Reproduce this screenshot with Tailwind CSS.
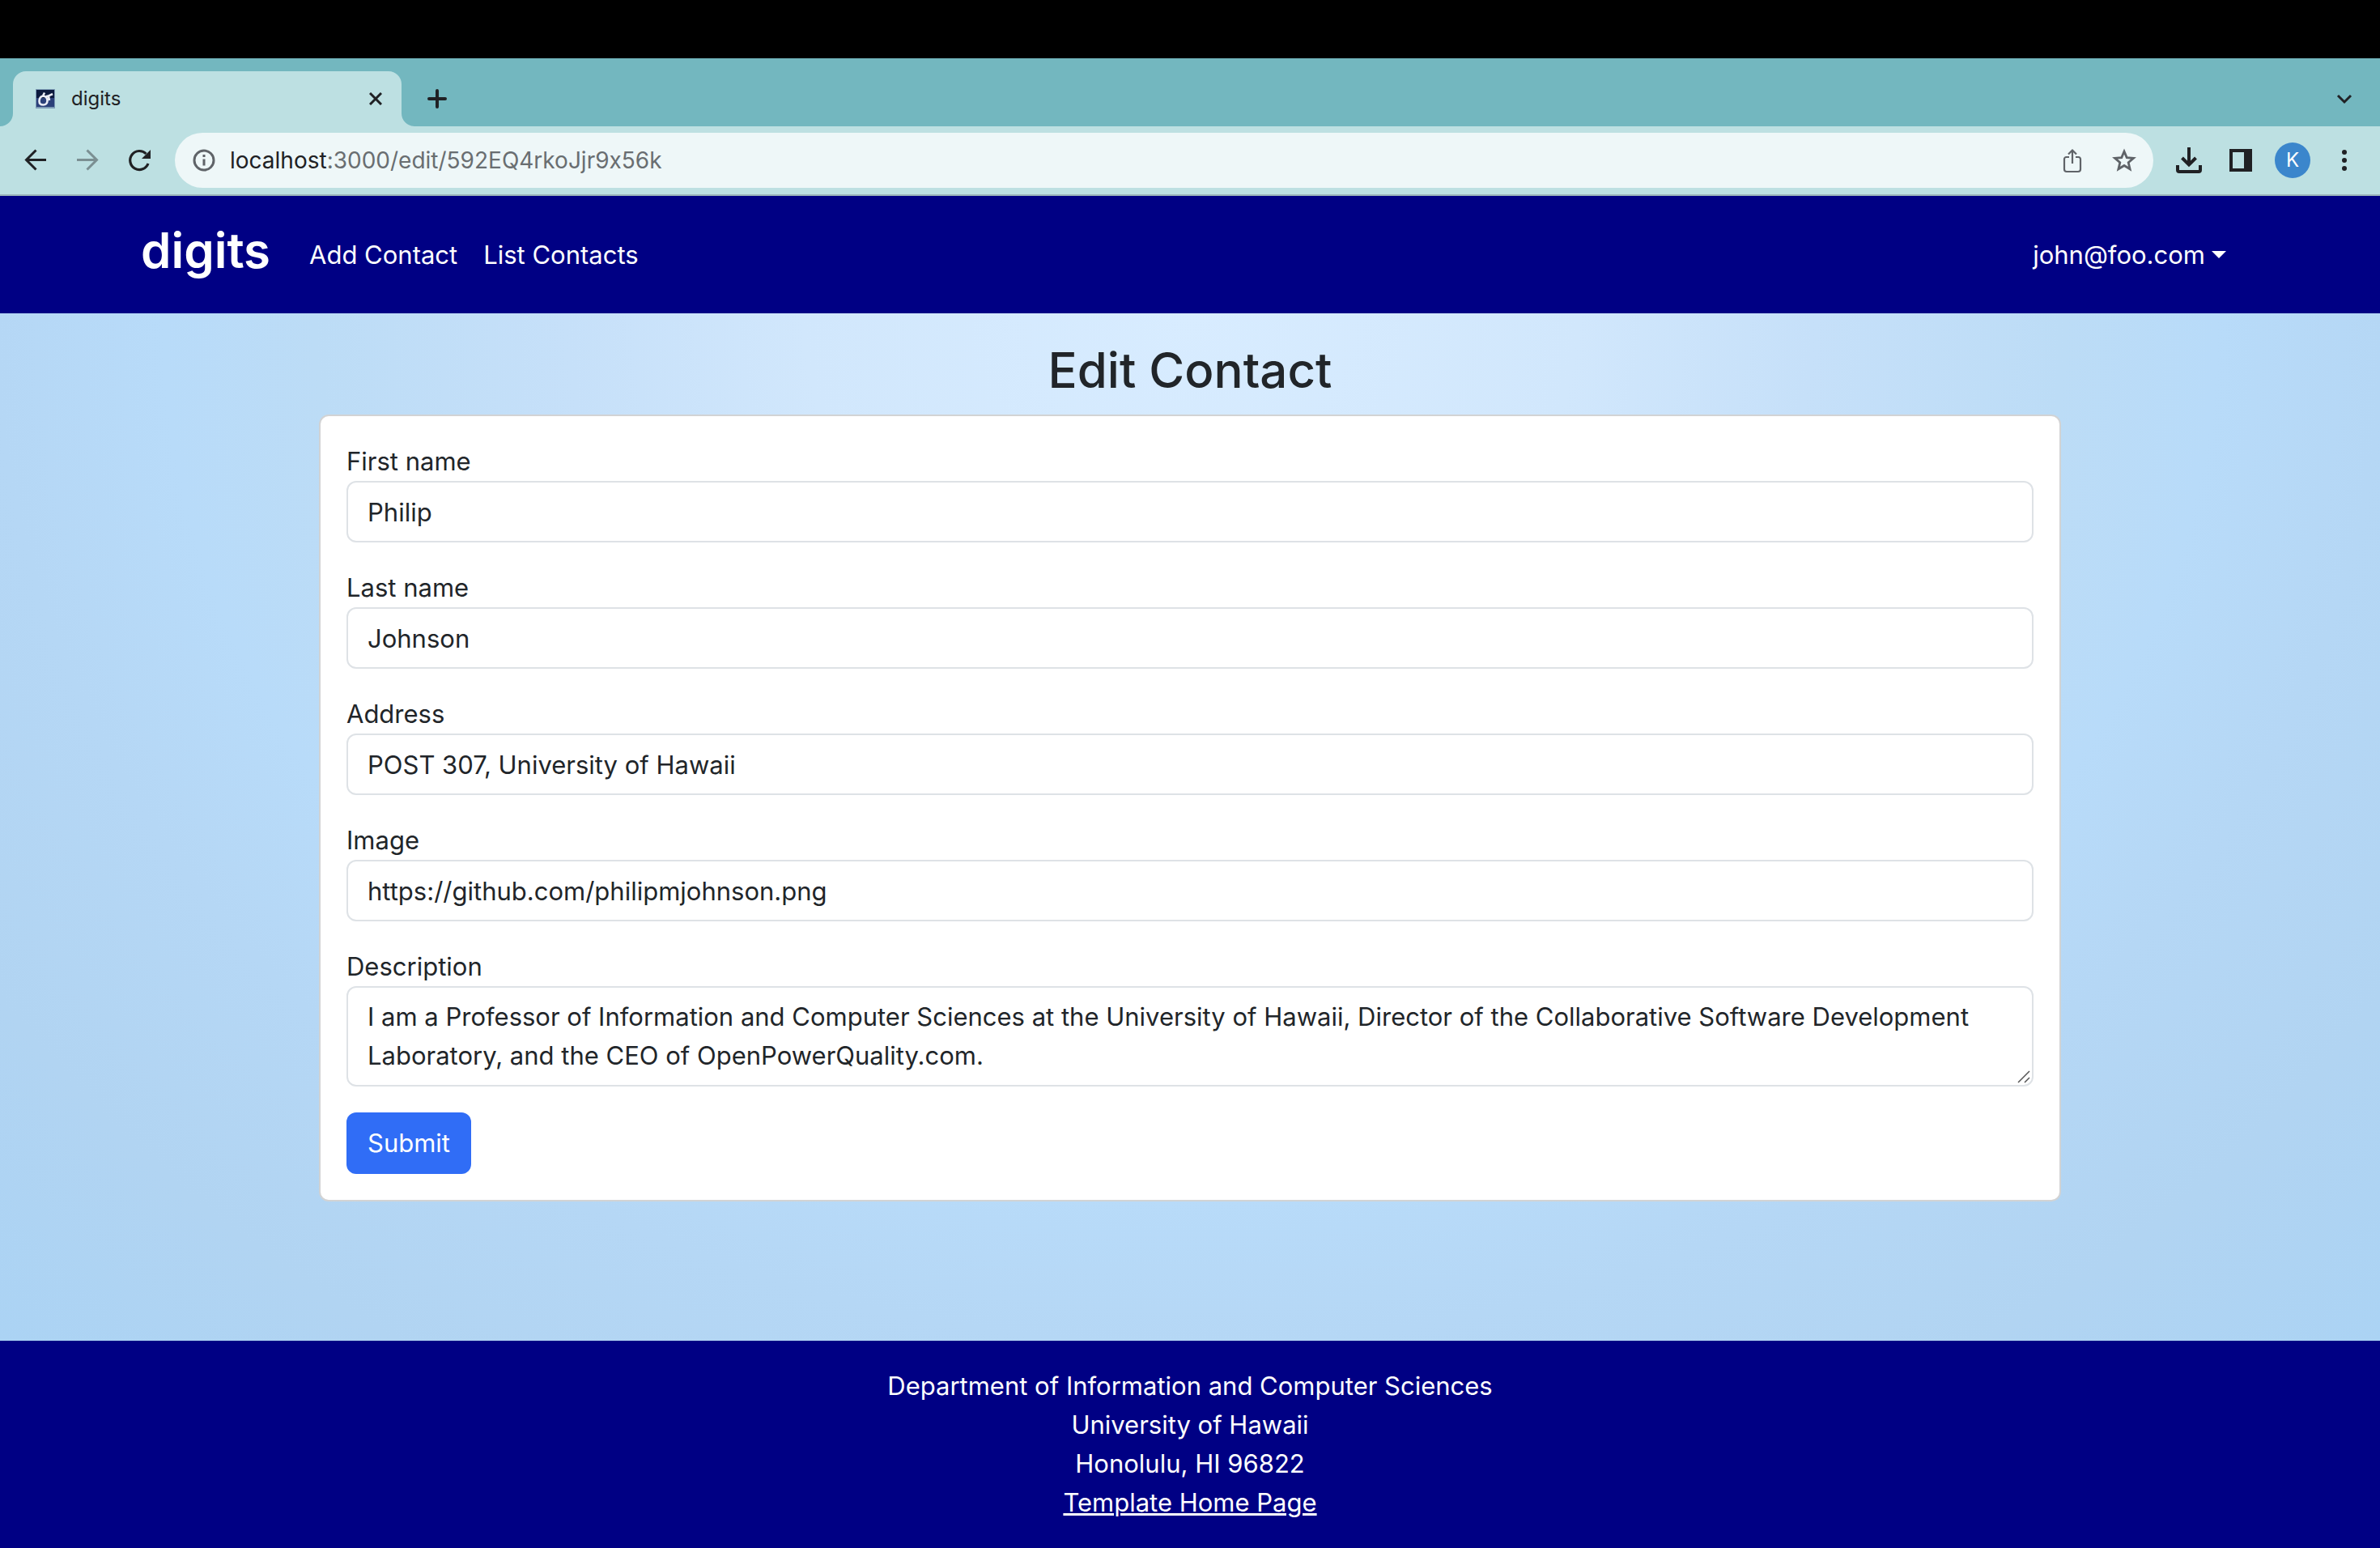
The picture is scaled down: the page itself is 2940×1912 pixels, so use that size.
<!DOCTYPE html>
<html lang="en">
<head>
<meta charset="utf-8">
<title>digits</title>
<script src="https://cdn.jsdelivr.net/npm/@tailwindcss/browser@4"></script>
</head>
<body class="flex min-h-screen flex-col bg-black pt-[72px] font-[Inter,sans-serif] text-[31px] leading-[48px] text-[#212529]">
  <header>
    <div class="flex h-[84px] items-end justify-between bg-[#73b7bf] pr-3">
      <div class="flex h-[68px] items-end">
        <svg class="h-4 w-4" viewBox="0 0 16 16" fill="#bde0e2"><path d="M16 0v16H0A16 16 0 0 0 16 0z"/></svg>
        <div class="flex h-[68px] w-[480px] items-center rounded-t-2xl bg-[#bde0e2] pr-4 pl-7">
          <svg class="h-6 w-6" viewBox="0 0 24 24" fill="none"><path fill="#7d9bb5" d="M0 0h24v24H0z"/><path fill="#0c1a3e" d="M1 1h22v10H1z"/><path fill="#2b4079" d="M1 11h22v11H1z"/><path d="M9.500 8.500C6 9 4.500 12 4.500 15s2 4.500 5 4.500 5-2 5-5-1.500-5.500-5-6zM9 8.500l2-4M13 9c3 0 5-1.500 8-3M16 9l1 5" stroke="#e9ecf5" stroke-width="2.600"/></svg>
          <span class="flex-1 pl-5 text-[24px] text-[#202124]">digits</span>
          <button class="flex h-8 w-8 items-center justify-center" aria-label="Close tab"><svg class="h-4 w-4" viewBox="0 0 16 16" stroke="#202124" stroke-width="3"><path d="M1 1l14 14M15 1 1 15"/></svg></button>
        </div>
        <svg class="h-4 w-4" viewBox="0 0 16 16" fill="#bde0e2"><path d="M0 0v16h16A16 16 0 0 1 0 0z"/></svg>
        <button class="flex h-[68px] w-14 items-center justify-center" aria-label="New tab"><svg class="h-6 w-6" viewBox="0 0 24 24" stroke="#202124" stroke-width="4" stroke-linecap="round"><path d="M12 2v20M2 12h20"/></svg></button>
      </div>
      <button class="flex h-[68px] w-16 items-center justify-center" aria-label="Search tabs"><svg class="h-6 w-6" viewBox="0 0 24 24" fill="none" stroke="#202124" stroke-width="3"><path d="m4 8 8 8 8-8"/></svg></button>
    </div>
    <div class="flex h-[86px] items-center border-b-2 border-[#9bb4ba] bg-[#bde0e2] px-3 text-[#202124]">
      <button class="flex w-16 justify-center" aria-label="Back"><svg class="h-8 w-8" viewBox="0 0 32 32" fill="none" stroke="#202124" stroke-width="3"><path d="M29 15.500H5M16.500 3.500l-12 12 12 12"/></svg></button>
      <button class="flex w-16 justify-center" aria-label="Forward"><svg class="h-8 w-8" viewBox="0 0 32 32" fill="none" stroke="#7b8f92" stroke-width="3"><path d="M3 15.500h24M15.500 3.500l12 12-12 12"/></svg></button>
      <button class="flex w-16 justify-center" aria-label="Reload"><svg class="h-8 w-8" viewBox="0 0 32 32" fill="none"><path d="M27 20a11.500 11.500 0 1 1-2.500-12" stroke="#202124" stroke-width="3.200"/><path d="M30 3v11H19z" fill="#202124"/></svg></button>
      <form class="ml-3 flex h-[68px] flex-1 items-center rounded-full bg-[#eef7f8] pr-1 pl-[22px]">
        <svg class="h-7 w-7" viewBox="0 0 28 28" fill="none" stroke="#5f6368" stroke-width="3"><circle cx="14" cy="14" r="12"/><path d="M14 12.500v8M14 7v3"/></svg>
        <a href="#" class="flex-1 pl-[18px] text-[28px] [font-feature-settings:'calt'_0]">localhost<span class="text-[#696e71]">:3000/edit/592EQ4rkoJjr9x56k</span></a>
        <button type="button" class="flex w-16 justify-center" aria-label="Share"><svg class="h-8 w-8" viewBox="0 0 32 32" fill="none" stroke="#5f6368" stroke-width="2.200"><path d="M12 12H8.500a2.500 2.500 0 0 0-2.500 2.500V27a3 3 0 0 0 3 3h14a3 3 0 0 0 3-3V14.500a2.500 2.500 0 0 0-2.500-2.500H20M16 20V4M11 8.500l5-5 5 5"/></svg></button>
        <button type="button" class="flex w-16 justify-center" aria-label="Bookmark"><svg class="h-8 w-8" viewBox="0 0 32 32" fill="none" stroke="#5f6368" stroke-width="2.800"><path d="m16 5 3.200 7.600 8.300.7-6.300 5.400 1.900 8.100-7.100-4.300-7.100 4.300 1.900-8.100-6.300-5.400 8.300-.7z"/></svg></button>
      </form>
      <button class="ml-3 flex w-16 justify-center" aria-label="Downloads"><svg class="h-8 w-8" viewBox="0 0 32 32" fill="none" stroke="#202124" stroke-width="4"><path d="M16 0v21M7.500 13l8.500 8.500 8.500-8.500M2 22v6a2 2 0 0 0 2 2h24a2 2 0 0 0 2-2v-6"/></svg></button>
      <button class="flex w-16 justify-center" aria-label="Side panel"><svg class="h-7 w-7" viewBox="0 0 28 28"><path fill="#202124" fill-rule="evenodd" d="M0 0h28v28H0zM4 4v20h14V4z"/></svg></button>
      <button class="flex w-16 justify-center" aria-label="Profile"><span class="flex h-11 w-11 items-center justify-center rounded-full bg-[#3b86cc] text-[24px] text-white">K</span></button>
      <button class="flex w-16 justify-center" aria-label="Menu"><svg class="h-8 w-8" viewBox="0 0 32 32" fill="#202124"><circle cx="16" cy="6" r="3"/><circle cx="16" cy="16" r="3"/><circle cx="16" cy="26" r="3"/></svg></button>
    </div>
  </header>

  <nav class="bg-[#000084] text-white">
    <div class="mx-auto flex h-[145px] w-[2640px] max-w-full items-center px-6">
      <a href="#" class="pb-3 text-[60px] leading-[96px] font-semibold">digits</a>
      <a href="#" class="ml-8 px-4">Add Contact</a>
      <a href="#" class="px-4">List Contacts</a>
      <button class="ml-auto flex items-center gap-2 px-4">john@foo.com<svg class="h-[9px] w-[18px]" viewBox="0 0 18 9" fill="#fff"><path d="M0 0h18L9 9z"/></svg></button>
    </div>
  </nav>

  <main class="flex-1 bg-[radial-gradient(ellipse_farthest-corner_at_top,#d8ecff_0%,#d1e7fc_23%,#c6e0f9_37%,#bcdcf6_52%,#b8dbf9_61%,#b5d7f5_71%,#b1d4f2_85%,#abd3f4_100%)] py-8">
    <h2 class="text-center text-[60px] leading-[77px] font-medium">Edit Contact</h2>
    <form class="mx-auto mt-4 flex w-[2152px] max-w-full flex-col gap-8 rounded-xl border-2 border-[#d2d3d4] bg-white p-8">
      <div class="flex flex-col">
        <label for="first">First name</label>
        <input id="first" type="text" value="Philip" class="h-[76px] rounded-xl border-2 border-[#dee2e6] px-6">
      </div>
      <div class="flex flex-col">
        <label for="last">Last name</label>
        <input id="last" type="text" value="Johnson" class="h-[76px] rounded-xl border-2 border-[#dee2e6] px-6">
      </div>
      <div class="flex flex-col">
        <label for="address">Address</label>
        <input id="address" type="text" value="POST 307, University of Hawaii" class="h-[76px] rounded-xl border-2 border-[#dee2e6] px-6">
      </div>
      <div class="flex flex-col">
        <label for="image">Image</label>
        <input id="image" type="text" value="https://github.com/philipmjohnson.png" class="h-[76px] rounded-xl border-2 border-[#dee2e6] px-6">
      </div>
      <div class="relative flex flex-col">
        <label for="description">Description</label>
        <textarea id="description" rows="2" class="h-[124px] resize-none overflow-hidden rounded-xl border-2 border-[#dee2e6] px-6 py-3">I am a Professor of Information and Computer Sciences at the University of Hawaii, Director of the Collaborative Software Development Laboratory, and the CEO of OpenPowerQuality.com.</textarea>
        <svg class="absolute right-1 bottom-1 h-4 w-4" viewBox="0 0 16 16" stroke="#555" stroke-width="1.500"><path d="M1 15 15 1M9 15l6-6"/></svg>
      </div>
      <button type="submit" class="h-[76px] self-start rounded-xl bg-[#306df6] px-[26px] text-white">Submit</button>
    </form>
  </main>

  <footer class="bg-[#000084] pt-8 pb-8 text-center text-white">
    <p>Department of Information and Computer Sciences</p>
    <p>University of Hawaii</p>
    <p>Honolulu, HI 96822</p>
    <p><a href="#" class="underline decoration-[3px]">Template Home Page</a></p>
  </footer>
</body>
</html>
